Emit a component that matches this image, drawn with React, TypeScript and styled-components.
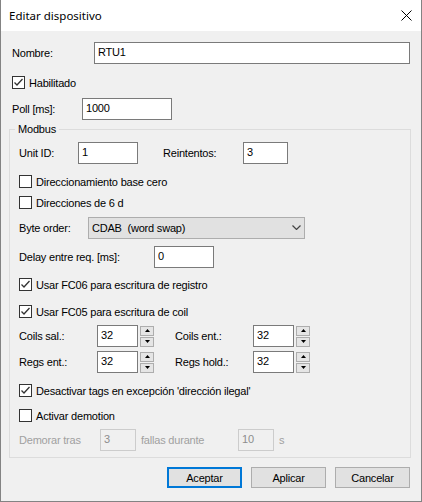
import React from "react";
import styled, { createGlobalStyle } from "styled-components";

const GlobalStyle = createGlobalStyle`
  html, body { margin: 0; padding: 0; background: #ffffff; }
  * { box-sizing: border-box; }
`;

const Window = styled.div`
  width: 422px;
  height: 502px;
  display: flex;
  flex-direction: column;
  border: 1px solid #838383;
  border-top: none;
  font-family: "Liberation Sans", Arial, sans-serif;
  font-size: 11px;
  letter-spacing: -0.2px;
  color: #000;
`;

const TitleBar = styled.div`
  height: 31px;
  flex: none;
  background: #ffffff;
  display: flex;
  align-items: center;
  justify-content: space-between;
  padding: 0 9px 0 8px;
`;

const TitleText = styled.span`
  font-family: "Noto Sans", sans-serif;
  font-size: 11.5px;
  letter-spacing: 0;
  color: #000;
`;

const CloseIcon = styled.svg`
  width: 11px;
  height: 11px;
  display: block;
`;

const Body = styled.div`
  flex: 1;
  background: #f0f0f0;
  padding: 11px 11px 0 11px;
  display: flex;
  flex-direction: column;
`;

const Row = styled.div<{ $mt?: number }>`
  display: flex;
  align-items: center;
  margin-top: ${(p) => p.$mt ?? 0}px;
`;

const Label = styled.span<{ $w?: number; $ml?: number; $disabled?: boolean }>`
  flex: none;
  width: ${(p) => (p.$w ? `${p.$w}px` : "auto")};
  margin-left: ${(p) => p.$ml ?? 0}px;
  color: ${(p) => (p.$disabled ? "#a0a0a0" : "#000")};
  white-space: nowrap;
`;

const TextBox = styled.input<{ $w?: number; $disabled?: boolean }>`
  flex: ${(p) => (p.$w ? "none" : "1")};
  width: ${(p) => (p.$w ? `${p.$w}px` : "auto")};
  min-width: 0;
  height: 22px;
  border: 1px solid ${(p) => (p.$disabled ? "#cccccc" : "#7a7a7a")};
  background: ${(p) => (p.$disabled ? "#f0f0f0" : "#ffffff")};
  color: ${(p) => (p.$disabled ? "#8d8d8d" : "#000")};
  font: inherit;
  letter-spacing: inherit;
  padding: 0 2px 2px 3px;
  margin: 0;
  outline: none;
  border-radius: 0;
`;

const CheckRow = styled.label<{ $mt?: number }>`
  display: flex;
  align-items: center;
  gap: 4px;
  height: 13px;
  margin-top: ${(p) => p.$mt ?? 0}px;
  white-space: nowrap;
`;

const Box = styled.span`
  width: 13px;
  height: 13px;
  flex: none;
  border: 1px solid #333333;
  background: #ffffff;
  display: flex;
  align-items: center;
  justify-content: center;
`;

const Group = styled.fieldset`
  margin: 3px -1px 0 -3px;
  padding: 6px 9px 6px 9px;
  border: 1px solid #dcdcdc;
  min-width: 0;
  display: flex;
  flex-direction: column;
`;

const Legend = styled.legend`
  padding: 0 3px;
  margin-left: -4px;
  line-height: 13px;
`;

const Combo = styled.div<{ $w: number }>`
  width: ${(p) => p.$w}px;
  height: 22px;
  border: 1px solid #adadad;
  background: #e1e1e1;
  display: flex;
  align-items: center;
  justify-content: space-between;
  padding: 0 3px 1px 3px;
  white-space: pre;
`;

const Spin = styled.div`
  display: flex;
  flex-direction: column;
  gap: 1px;
  margin-left: 2px;
  flex: none;
`;

const SpinButton = styled.span`
  width: 14px;
  height: 10px;
  border: 1px solid #adadad;
  background: #e5e5e5;
  display: flex;
  align-items: center;
  justify-content: center;
`;

const Footer = styled.div`
  display: flex;
  justify-content: flex-end;
  gap: 9px;
  margin-top: 9px;
`;

const Button = styled.button<{ $primary?: boolean }>`
  width: 75px;
  height: 21px;
  padding: 0;
  margin: 0;
  font: inherit;
  letter-spacing: inherit;
  color: #000;
  background: #e1e1e1;
  border: ${(p) => (p.$primary ? "2px solid #0078d7" : "1px solid #adadad")};
  border-radius: 0;
`;

const CheckBox: React.FC<{ checked?: boolean }> = ({ checked }) => (
  <Box>
    {checked && (
      <svg width="11" height="11" viewBox="0 0 11 11">
        <polyline points="1.5,5.5 4,8 9.5,2" fill="none" stroke="#333" strokeWidth="1.3" />
      </svg>
    )}
  </Box>
);

const SpinBox: React.FC<{ value: string; w: number }> = ({ value, w }) => (
  <>
    <TextBox $w={w} defaultValue={value} />
    <Spin>
      <SpinButton>
        <svg width="5" height="3" viewBox="0 0 5 3">
          <polygon points="2.5,0 5,3 0,3" fill="#000" />
        </svg>
      </SpinButton>
      <SpinButton>
        <svg width="5" height="3" viewBox="0 0 5 3">
          <polygon points="0,0 5,0 2.5,3" fill="#000" />
        </svg>
      </SpinButton>
    </Spin>
  </>
);

export default function App() {
  return (
    <>
      <GlobalStyle />
      <Window>
        <TitleBar>
          <TitleText>Editar dispositivo</TitleText>
          <CloseIcon viewBox="0 0 11 11">
            <line x1="0.5" y1="0.5" x2="10.5" y2="10.5" stroke="#000" strokeWidth="1" />
            <line x1="10.5" y1="0.5" x2="0.5" y2="10.5" stroke="#000" strokeWidth="1" />
          </CloseIcon>
        </TitleBar>
        <Body>
          <Row>
            <Label $w={82}>Nombre:</Label>
            <TextBox defaultValue="RTU1" />
          </Row>
          <CheckRow $mt={12}>
            <CheckBox checked />
            Habilitado
          </CheckRow>
          <Row $mt={9}>
            <Label $w={70}>Poll [ms]:</Label>
            <TextBox $w={90} defaultValue="1000" />
          </Row>
          <Group>
            <Legend>Modbus</Legend>
            <Row>
              <Label $w={59}>Unit ID:</Label>
              <TextBox $w={60} defaultValue="1" />
              <Label $w={80} $ml={25}>Reintentos:</Label>
              <TextBox $w={45} defaultValue="3" />
            </Row>
            <CheckRow $mt={11}>
              <CheckBox />
              Direccionamiento base cero
            </CheckRow>
            <CheckRow $mt={8}>
              <CheckBox />
              Direcciones de 6 d
            </CheckRow>
            <Row $mt={8}>
              <Label $w={69}>Byte order:</Label>
              <Combo $w={217}>
                <span>CDAB  (word swap)</span>
                <svg width="9" height="5" viewBox="0 0 9 5">
                  <polyline points="0.5,0.5 4.5,4.5 8.5,0.5" fill="none" stroke="#444" strokeWidth="1.2" />
                </svg>
              </Combo>
            </Row>
            <Row $mt={7}>
              <Label $w={135}>Delay entre req. [ms]:</Label>
              <TextBox $w={60} defaultValue="0" />
            </Row>
            <CheckRow $mt={10}>
              <CheckBox checked />
              Usar FC06 para escritura de registro
            </CheckRow>
            <CheckRow $mt={14}>
              <CheckBox checked />
              Usar FC05 para escritura de coil
            </CheckRow>
            <Row $mt={7}>
              <Label $w={78}>Coils sal.:</Label>
              <SpinBox value="32" w={41} />
              <Label $w={78} $ml={21}>Coils ent.:</Label>
              <SpinBox value="32" w={41} />
            </Row>
            <Row $mt={4}>
              <Label $w={78}>Regs ent.:</Label>
              <SpinBox value="32" w={41} />
              <Label $w={78} $ml={21}>Regs hold.:</Label>
              <SpinBox value="32" w={41} />
            </Row>
            <CheckRow $mt={11}>
              <CheckBox checked />
              Desactivar tags en excepción 'dirección ilegal'
            </CheckRow>
            <CheckRow $mt={12}>
              <CheckBox />
              Activar demotion
            </CheckRow>
            <Row $mt={7}>
              <Label $w={81} $disabled>Demorar tras</Label>
              <TextBox $w={36} $disabled disabled defaultValue="3" />
              <Label $w={97} $ml={5} $disabled>fallas durante</Label>
              <TextBox $w={36} $disabled disabled defaultValue="10" />
              <Label $ml={5} $disabled>s</Label>
            </Row>
          </Group>
          <Footer>
            <Button $primary>Aceptar</Button>
            <Button>Aplicar</Button>
            <Button>Cancelar</Button>
          </Footer>
        </Body>
      </Window>
    </>
  );
}
